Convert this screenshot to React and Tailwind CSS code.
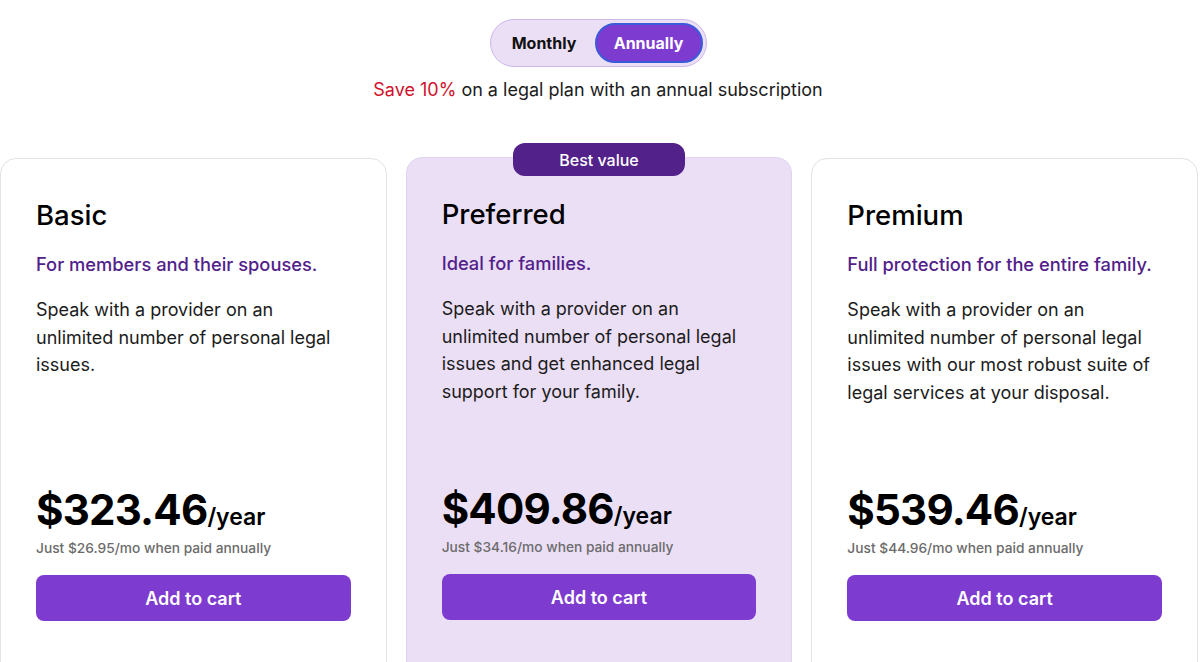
import React from 'react';

const plans = [
  {
    name: 'Basic',
    tagline: 'For members and their spouses.',
    body: 'Speak with a provider on an unlimited number of personal legal issues.',
    price: '$323.46',
    monthly: 'Just $26.95/mo when paid annually',
  },
  {
    name: 'Preferred',
    tagline: 'Ideal for families.',
    body: 'Speak with a provider on an unlimited number of personal legal issues and get enhanced legal support for your family.',
    price: '$409.86',
    monthly: 'Just $34.16/mo when paid annually',
    featured: true,
  },
  {
    name: 'Premium',
    tagline: 'Full protection for the entire family.',
    body: 'Speak with a provider on an unlimited number of personal legal issues with our most robust suite of legal services at your disposal.',
    price: '$539.46',
    monthly: 'Just $44.96/mo when paid annually',
  },
];

const PlanCard = ({ plan }) => {
  return (
    <div
      className={
        'relative h-[530px] rounded-2xl border px-[35px] pt-[40px] ' +
        (plan.featured ? 'bg-[#ebdff6] border-[#e2d3f1] -mt-px' : 'bg-white border-[#e3e3e6]')
      }
    >
      {plan.featured && (
        <div className="absolute left-1/2 -translate-x-1/2 -top-[15px] w-[172px] h-[33px] rounded-xl bg-[#52218a] flex items-center justify-center text-white text-[16px] font-medium">
          Best value
        </div>
      )}
      <h2 className="text-[27.5px] leading-[32px] font-medium text-black">{plan.name}</h2>
      <p className="mt-[20px] text-[18.3px] leading-[27px] font-medium text-[#52218a]">{plan.tagline}</p>
      <p className="mt-[18px] h-[191px] text-[18px] leading-[27.6px] text-[#1b1b1b]">{plan.body}</p>
      <div className="flex items-baseline h-[46px] text-black">
        <span className="text-[42px] leading-[46px] font-bold tracking-[-0.8px]">{plan.price}</span>
        <span className="text-[23px] leading-none font-semibold">/year</span>
      </div>
      <p className="mt-[5px] text-[13.75px] leading-[20px] font-medium text-[#6b6b6b]">{plan.monthly}</p>
      <button className="mt-[17px] w-full h-[46px] rounded-lg bg-[#7e3bd0] text-white text-[18px] font-semibold">
        Add to cart
      </button>
    </div>
  );
};

export default function App() {
  return (
    <div className="w-[1200px] h-[662px] overflow-hidden bg-white font-['Inter','Noto_Sans',sans-serif]">
      <div className="flex flex-col items-center pt-[19px] pr-[4px]">
        <div className="flex items-center h-[48px] p-[3px] rounded-full bg-[#ebdff6] border border-[#cdb8ea]">
          <div className="w-[101px] h-[40px] flex items-center justify-center text-[16px] font-bold text-[#111]">
            Monthly
          </div>
          <div className="w-[108px] h-[40px] flex items-center justify-center rounded-full bg-[#7e3bd0] border-2 border-[#3a5bd9] text-[16px] font-bold text-white">
            Annually
          </div>
        </div>
        <p className="mt-[9px] text-[18px] leading-[27px] text-[#1b1b1b]">
          <span className="text-[#d0112b]">Save 10%</span> on a legal plan with an annual subscription
        </p>
      </div>
      <div className="mt-[55px] grid grid-cols-3 gap-[19px] pr-[2px]">
        {plans.map((plan) => (
          <PlanCard key={plan.name} plan={plan} />
        ))}
      </div>
    </div>
  );
}
